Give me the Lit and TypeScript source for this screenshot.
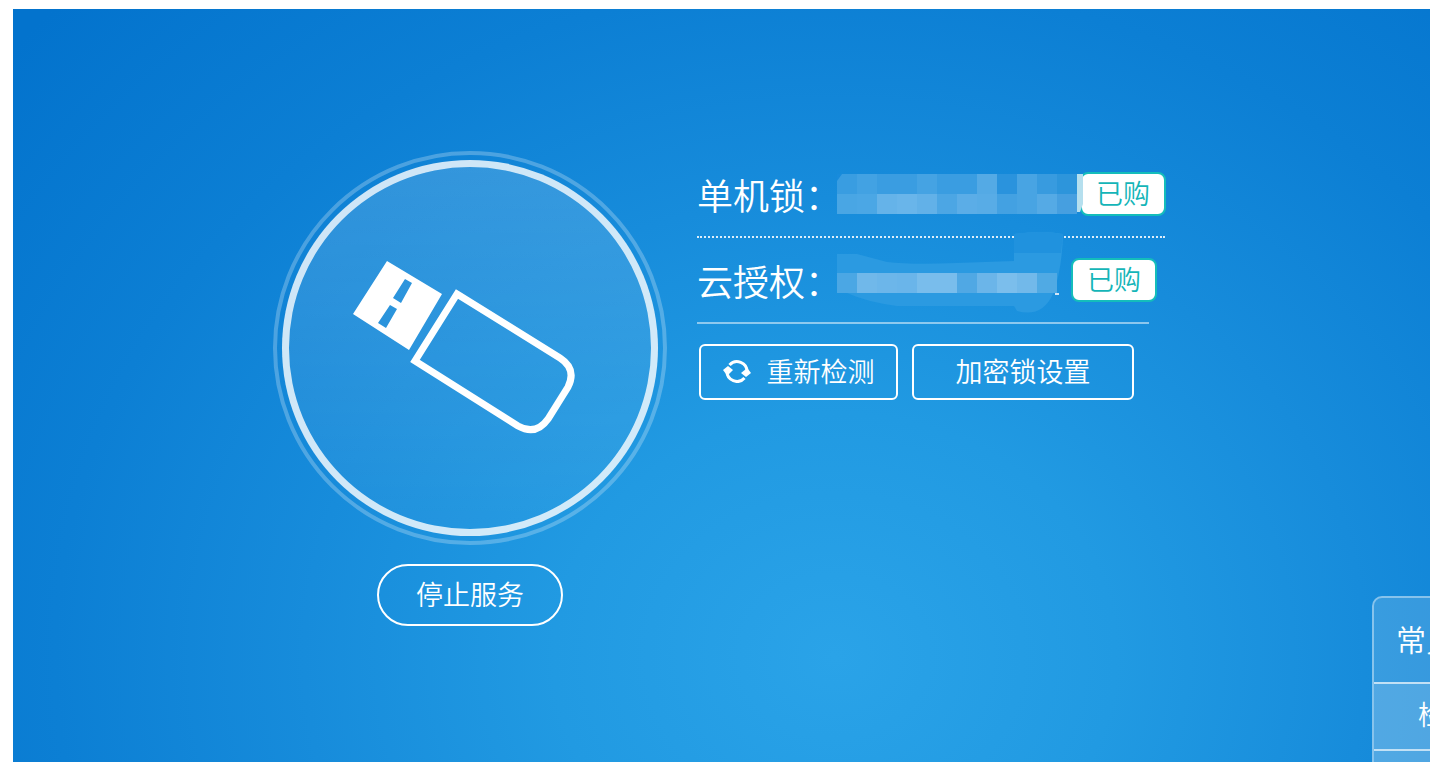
import { LitElement, html, svg, css } from "lit";
import { customElement } from "lit/decorators.js";

const CELL = 20;

const DEVICE_CELLS = [
  ["#399de1", "#42a2e3", "#3a9de1", "#3a9de1", "#45a3e3", "#3a9de1", "#3a9de1", "#54aae5", "#2a93dd", "#48a4e3", "#389bdf", "#2d95db"],
  ["#49a6e4", "#4ba7e5", "#65b3e9", "#69b5ea", "#62b1e8", "#4ca6e4", "#5bade7", "#58ace6", "#43a1e2", "#48a4e3", "#55aae5", "#469fe0"],
];

const CLOUD_CELLS = [
  ["#4ba7e4", "#70b8ea", "#6cb6ea", "#6ab5ea", "#79bdec", "#79bdec", "#50a8e4", "#6bb5e9", "#7bbeec", "#72b9ea", "#50aae4"],
];

const cells = (rows: string[][], top: number) =>
  rows.map((row, r) =>
    row.map(
      (fill, c) =>
        svg`<rect x=${c * CELL} y=${top + r * CELL} width=${CELL} height=${CELL} fill=${fill}></rect>`
    )
  );

@customElement("app-root")
export class AppRoot extends LitElement {
  static styles = css`
    :host {
      display: block;
      box-sizing: border-box;
      height: 100vh;
      padding: 9px 0 0 13px;
      overflow: hidden;
      background: #fff;
      color: #fff;
      font-family: "Noto Sans CJK SC", "Noto Sans", sans-serif;
      font-size: 27px;
      font-weight: 350;
      line-height: 40px;
    }
    * {
      box-sizing: border-box;
    }
    .stage {
      display: flex;
      align-items: flex-start;
      height: 100%;
      padding-left: 260px;
      overflow: hidden;
      background: radial-gradient(
        ellipse 1040px 900px at 58% 86%,
        #2aa3e8 0%,
        #219ae2 27%,
        #178cdb 51%,
        #0c7fd4 75%,
        #0373cd 104%
      );
    }
    .service {
      display: flex;
      flex: none;
      flex-direction: column;
      align-items: center;
      gap: 19px;
      margin-top: 142px;
    }
    .halo {
      width: 394px;
      height: 394px;
      padding: 5px;
      border: 4px solid rgba(255, 255, 255, 0.25);
      border-radius: 50%;
    }
    .disc {
      display: flex;
      align-items: center;
      justify-content: center;
      height: 100%;
      padding-right: 12px;
      border: 7px solid rgba(255, 255, 255, 0.8);
      border-radius: 50%;
      background: linear-gradient(rgba(255, 255, 255, 0.15), rgba(255, 255, 255, 0.03)) padding-box;
    }
    svg {
      display: block;
      flex: none;
    }
    button {
      display: flex;
      align-items: center;
      justify-content: center;
      margin: 0;
      padding: 0 0 2px;
      border: 2px solid #fff;
      background: transparent;
      color: inherit;
      font: inherit;
      cursor: pointer;
    }
    .stop {
      width: 186px;
      height: 62px;
      border-radius: 31px;
    }
    .info {
      flex: none;
      margin: 143px 0 0 30px;
    }
    .row {
      display: flex;
      align-items: center;
      height: 86px;
      border-bottom: 2px solid rgba(255, 255, 255, 0.5);
    }
    .device {
      width: 468px;
      border-bottom: 2px dotted rgba(255, 255, 255, 0.85);
    }
    .cloud {
      width: 452px;
    }
    .label {
      flex: none;
      width: 140px;
      font-size: 36px;
      white-space: nowrap;
    }
    .mask {
      overflow: visible;
    }
    .device .mask {
      position: relative;
      z-index: 1;
    }
    .badge {
      flex: none;
      width: 86px;
      height: 44px;
      border: 2px solid #14bdbb;
      border-radius: 8px;
      background: #fff;
      color: #14b5b8;
      line-height: 38px;
      text-align: center;
    }
    .actions {
      display: flex;
      gap: 14px;
      padding: 20px 0 0 2px;
    }
    .action {
      gap: 16px;
      height: 56px;
      border-radius: 6px;
    }
    .check {
      width: 199px;
    }
    .settings {
      width: 222px;
    }
    .help {
      flex: none;
      width: 260px;
      margin: 587px -202px 0 auto;
      border: 2px solid rgba(255, 255, 255, 0.4);
      border-radius: 10px;
      background: rgba(255, 255, 255, 0.15);
    }
    .title {
      margin: 0;
      padding: 20px 22px 24px;
      font-size: 30px;
      font-weight: 350;
      line-height: 40px;
    }
    .list {
      margin: 0;
      padding: 0;
      list-style: none;
    }
    .item {
      padding: 10px 44px 15px;
      border-top: 2px solid rgba(255, 255, 255, 0.65);
      background: rgba(255, 255, 255, 0.13);
    }
    .link {
      color: inherit;
      text-decoration: none;
    }
  `;

  render() {
    return html`
      <main class="stage">
        <section class="service">
          <div class="halo">
            <div class="disc">
              <svg width="224" height="176" viewBox="0 0 224 176" aria-hidden="true">
                <path
                  fill="#fff"
                  fill-rule="evenodd"
                  d="M35 1L90 34L57 90L1 54ZM53 19L41 38L49 43L60 23ZM38 45L26 63L34 68L45 49Z"
                />
                <path
                  fill="none"
                  stroke="#fff"
                  stroke-width="7"
                  d="M105 34L208 98Q225 109 216 127L196 159Q184 176 166 166L63 101Z"
                />
              </svg>
            </div>
          </div>
          <button class="stop" type="button">停止服务</button>
        </section>

        <section class="info">
          <div class="row device">
            <span class="label">单机锁：</span>
            <svg class="mask" width="243" height="40" viewBox="0 0 243 40" aria-hidden="true">
              ${cells(DEVICE_CELLS, 0)}
              <path fill="#b5dfee" d="M240 0H246V30L243 38H240Z" />
              <path fill="#188bdc" d="M0 0H5L0 7Z" />
            </svg>
            <span class="badge">已购</span>
          </div>
          <div class="row cloud">
            <span class="label">云授权：</span>
            <svg class="mask" width="234" height="40" viewBox="0 0 234 40" aria-hidden="true">
              <path
                fill="#2b9ae1"
                d="M0 -6H20L50 2Q75 5 120 3L177 1V-26Q205 -30 226 -26Q225 10 216 34Q205 58 180 51L177 46H60Q30 42 10 33H0Z"
              />
              <path fill="#2092de" d="M177 -26Q205 -30 226 -26L224 -7H177Z" />
              ${cells(CLOUD_CELLS, 13)}
              <path fill="#d3e5f6" d="M218 33H222V35H218Z" />
            </svg>
            <span class="badge">已购</span>
          </div>
          <div class="actions">
            <button class="action check" type="button">
              <svg width="28" height="24" viewBox="0 0 28 24" aria-hidden="true">
                <g fill="none" stroke="#fff" stroke-width="3">
                  <path d="M6.500 6A10 10 0 0 1 24 13" />
                  <path d="M21.500 19A10 10 0 0 1 4 12" />
                </g>
                <path fill="#fff" d="M18 14L23 10H25L28 14L23 18ZM0 11L5 7L10 11L6 15H3Z" />
              </svg>
              <span>重新检测</span>
            </button>
            <button class="action settings" type="button">加密锁设置</button>
          </div>
        </section>

        <aside class="help">
          <h2 class="title">常见问题</h2>
          <ul class="list">
            <li class="item"><a class="link" href="#check">检测</a></li>
            <li class="item"><a class="link" href="#settings">设置</a></li>
          </ul>
        </aside>
      </main>
    `;
  }
}
